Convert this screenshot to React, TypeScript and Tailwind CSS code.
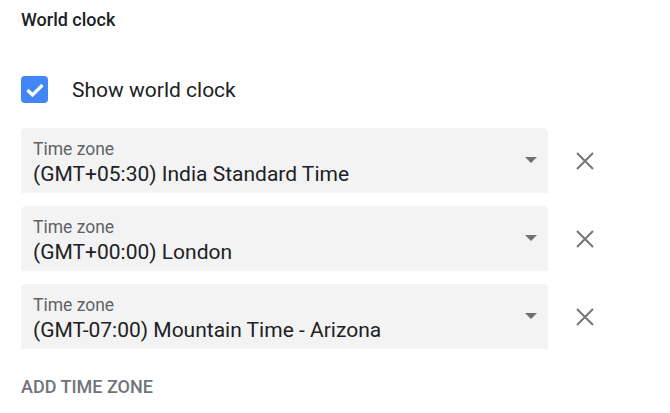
import React from 'react';

const zones = [
  '(GMT+05:30) India Standard Time',
  '(GMT+00:00) London',
  '(GMT-07:00) Mountain Time - Arizona',
];

const TimeZoneField = ({ value }: { value: string }) => (
  <div className="flex items-center">
    <div className="relative h-[65px] w-[527px] rounded-t-[5px] bg-[#f3f3f3] pl-3 pt-[11px]">
      <div className="text-[17.5px] leading-[21px] text-[#5f6368]">Time zone</div>
      <div className="mt-px text-[21px] leading-[26px] text-[#202124]">{value}</div>
      <svg className="absolute right-[11px] top-[29px]" width="12" height="6" viewBox="0 0 12 6">
        <path d="M0 0 L12 0 L6 6 Z" fill="#707070" />
      </svg>
    </div>
    <button className="ml-[27px] flex h-[20px] w-[20px] items-center justify-center">
      <svg width="18" height="18" viewBox="0 0 18 18">
        <path d="M1 1 L17 17 M17 1 L1 17" stroke="#757575" strokeWidth="2" />
      </svg>
    </button>
  </div>
);

export default function App() {
  return (
    <div className="min-h-screen bg-white px-[21px] pt-[9px] font-['Roboto','Liberation_Sans',sans-serif]">
      <div className="text-[18px] font-medium leading-[22px] text-[#202124]">World clock</div>

      <div className="mt-[45px] flex h-[27px] items-center">
        <div className="flex h-[27px] w-[27px] items-center justify-center rounded-[4px] bg-[#4285f4]">
          <svg width="20" height="16" viewBox="0 0 20 16">
            <path d="M2.5 8 L7.5 13 L17.5 3" stroke="white" strokeWidth="3.2" fill="none" />
          </svg>
        </div>
        <span className="ml-[24px] pt-[2px] text-[21px] text-[#202124]">Show world clock</span>
      </div>

      <div className="mt-[25px] flex flex-col gap-[13px]">
        {zones.map((z) => (
          <TimeZoneField key={z} value={z} />
        ))}
      </div>

      <div className="mt-[27px] text-[18px] font-medium leading-[22px] text-[#70757a]">ADD TIME ZONE</div>
    </div>
  );
}
